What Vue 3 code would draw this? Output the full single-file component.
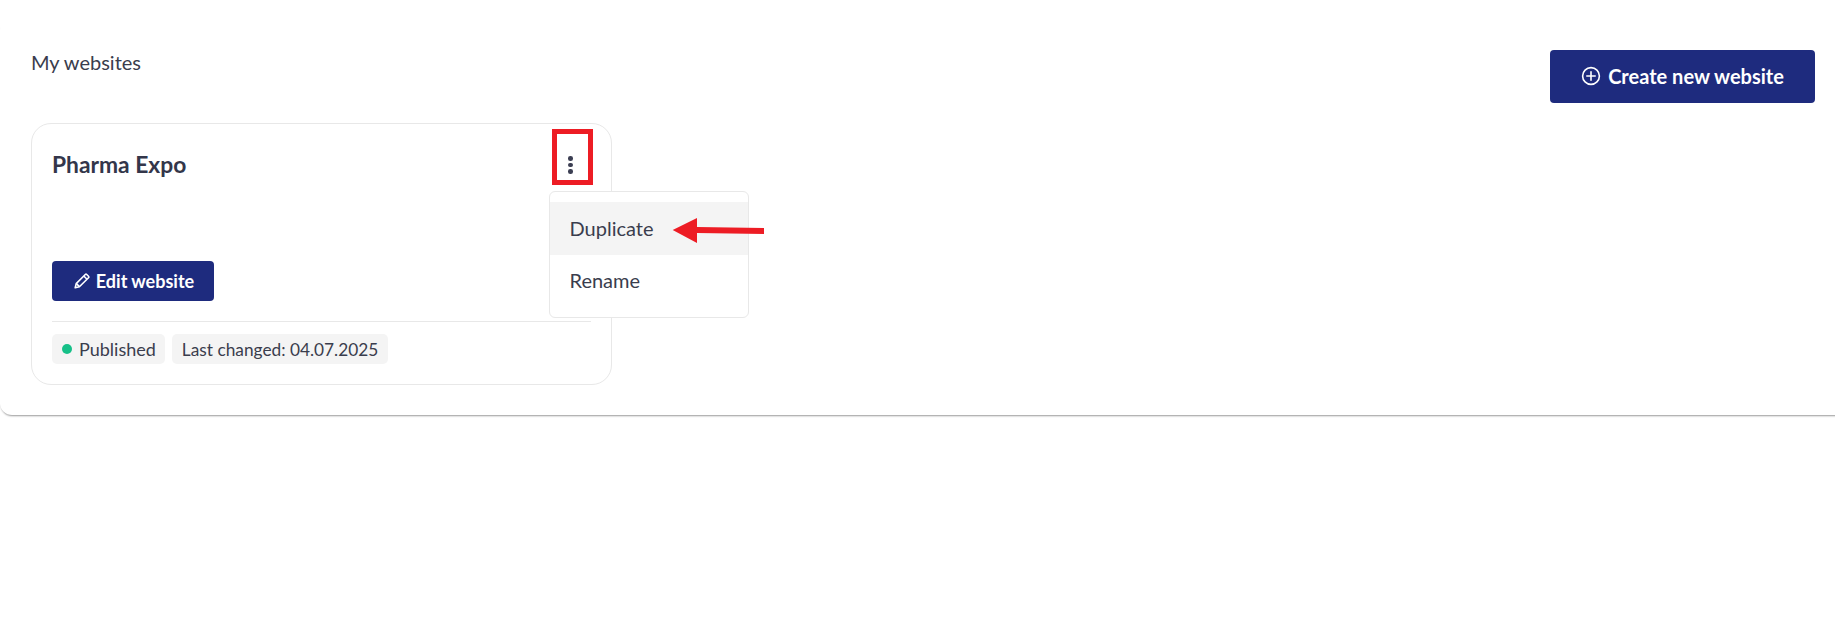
<script setup>
import { ref } from 'vue';

const sites = ref([
  { name: 'Pharma Expo', status: 'Published', changed: '04.07.2025' }
]);
const menuItems = ['Duplicate', 'Rename'];
</script>

<template>
  <div class="page">
    <section class="panel">
      <div class="head">
        <h1 class="title">My websites</h1>
        <button class="btn btn-create">
          <svg class="plus" viewBox="0 0 20 20" width="20" height="20" fill="none" stroke="#fff" stroke-width="1.6" stroke-linecap="round">
            <circle cx="10" cy="10" r="8.4" />
            <path d="M10 5.8v8.4M5.8 10h8.4" />
          </svg>
          <span>Create new website</span>
        </button>
      </div>

      <div v-for="site in sites" :key="site.name" class="card">
        <div class="card-top">
          <h2 class="card-name">{{ site.name }}</h2>
          <button class="dots">
            <span></span><span></span><span></span>
          </button>
          <div class="menu">
            <div v-for="(item, i) in menuItems" :key="item" class="menu-item" :class="{ active: i === 0 }">{{ item }}</div>
          </div>
          <!-- красная рамка и стрелка поверх скриншота -->
          <div class="mark-box"></div>
          <svg class="mark-arrow" width="94" height="30" viewBox="0 0 94 30">
            <path d="M0.7 14 L25 2 L25 11 L92 12 L92 18 L25 17 L25 27 Z" fill="#ed1c24" />
          </svg>
        </div>

        <button class="btn btn-edit">
          <svg viewBox="0 0 16 16" width="16" height="16" fill="none" stroke="#fff" stroke-width="1.6" stroke-linejoin="round">
            <path d="M1.2 14.8l1-4.2L11.3 1.5a1 1 0 0 1 1.4 0l1.8 1.8a1 1 0 0 1 0 1.4L5.4 13.8z" />
            <path d="M9.8 3l3.2 3.2M2.4 10.6l3 3" />
          </svg>
          <span>Edit website</span>
        </button>

        <div class="card-foot">
          <span class="chip chip-status"><i class="dot"></i>{{ site.status }}</span>
          <span class="chip chip-date">Last changed: {{ site.changed }}</span>
        </div>
      </div>
    </section>
  </div>
</template>

<style>
html, body {
  margin: 0;
  background: #fff;
}
</style>

<style scoped>
.page {
  height: 640px;
  padding-top: 20px;
  box-sizing: border-box;
  overflow: hidden;
  font-family: Lato, "Liberation Sans", sans-serif;
  color: #3a3d4d;
}

.panel {
  width: calc(100% + 20px);
  height: 395px;
  box-sizing: border-box;
  padding: 30px 40px 0 31px;
  border-radius: 12px;
  background: #fff;
  box-shadow: 0 2px 2px -1px rgba(0, 0, 0, 0.4);
}

.head {
  display: flex;
  justify-content: space-between;
  align-items: flex-start;
  height: 73px;
}

.title {
  margin: 0;
  font-size: 20px;
  font-weight: 400;
  line-height: 24px;
}

.btn {
  display: flex;
  align-items: center;
  padding: 0 0 1px;
  border: 0;
  color: #fff;
  background: #1e2b7e;
  font-family: inherit;
  font-weight: 700;
  border-radius: 4px;
}

.btn-create {
  width: 265px;
  height: 53px;
  justify-content: center;
  gap: 7px;
  font-size: 20px;
}

.card {
  width: 581px;
  height: 262px;
  box-sizing: border-box;
  padding: 0 20px;
  border: 1px solid #e8e8e8;
  border-radius: 20px;
  background: #fff;
}

.card-top {
  position: relative;
  height: 137px;
}

.card-name {
  margin: 0;
  padding-top: 26px;
  font-size: 22.8px;
  font-weight: 700;
  line-height: 28px;
  color: #33364a;
}

.dots {
  position: absolute;
  left: 516px;
  top: 32px;
  display: flex;
  flex-direction: column;
  gap: 2px;
  padding: 0;
  border: 0;
  background: none;
}

.dots span {
  width: 4.5px;
  height: 4.5px;
  border-radius: 50%;
  background: #3b3e52;
}

.menu {
  position: absolute;
  left: 497px;
  top: 67px;
  z-index: 2;
  width: 200px;
  height: 127px;
  box-sizing: border-box;
  padding-top: 10px;
  border: 1px solid #e8e8e8;
  border-radius: 6px;
  background: #fff;
}

.menu-item {
  height: 50px;
  padding-left: 19.5px;
  font-size: 20px;
  line-height: 50px;
}

.menu-item.active {
  height: 53px;
  line-height: 53px;
  background: #f4f4f4;
}

.mark-box {
  position: absolute;
  left: 500px;
  top: 5px;
  z-index: 3;
  width: 41px;
  height: 56px;
  box-sizing: border-box;
  border: 5px solid #ed1c24;
}

.mark-arrow {
  position: absolute;
  left: 620px;
  top: 92px;
  z-index: 3;
}

.btn-edit {
  width: 162px;
  height: 40px;
  justify-content: center;
  gap: 6px;
  padding-left: 2px;
  font-size: 18px;
}

.card-foot {
  display: flex;
  gap: 7px;
  margin-top: 20px;
  padding-top: 12px;
  border-top: 1px solid #e8e8e8;
}

.chip {
  display: flex;
  align-items: center;
  height: 30px;
  padding: 0 10px;
  border-radius: 5px;
  background: #f4f4f4;
  font-size: 18px;
}

.chip-status {
  padding-right: 9px;
}

.chip-date {
  font-size: 17.3px;
}

.dot {
  width: 10px;
  height: 10px;
  margin-right: 7px;
  border-radius: 50%;
  background: #16c088;
}
</style>
